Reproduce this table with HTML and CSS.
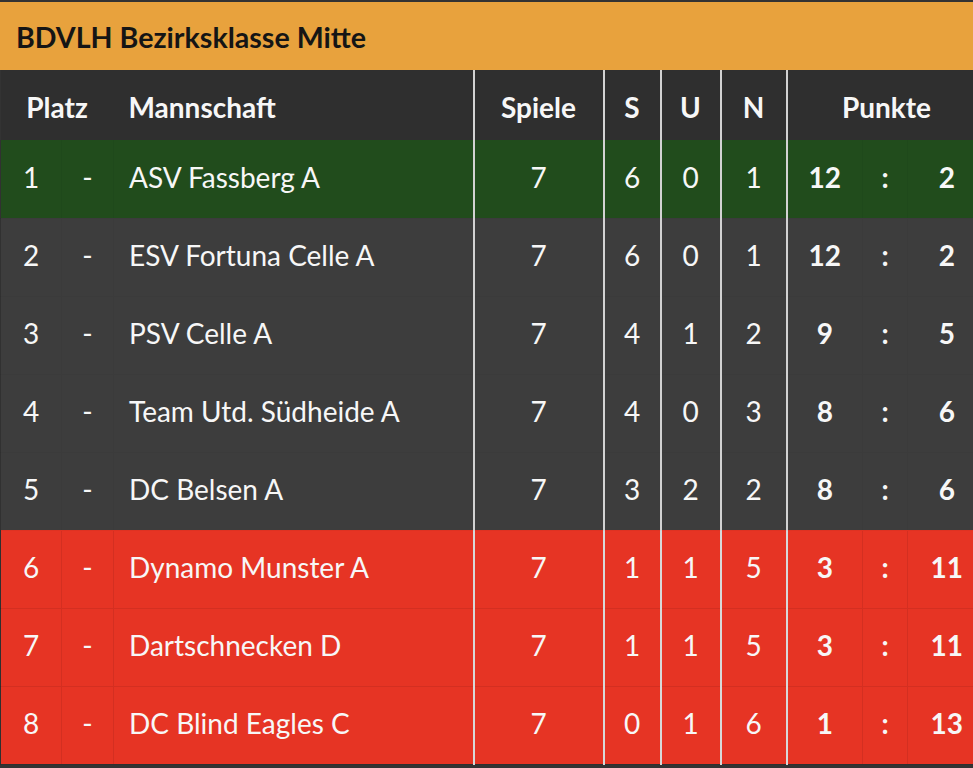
FILE: index.html
```html
<!DOCTYPE html>
<html lang="de">
<head>
<meta charset="utf-8">
<title>BDVLH Bezirksklasse Mitte</title>
<link rel="stylesheet" href="styles.css">
</head>
<body>
<div class="page">
<div class="title">BDVLH Bezirksklasse Mitte</div>
<table class="standings">
  <colgroup>
    <col class="c-platz"><col class="c-dash"><col class="c-team"><col class="c-spiele">
    <col class="c-s"><col class="c-u"><col class="c-n"><col class="c-p1"><col class="c-p2"><col class="c-p3">
  </colgroup>
  <thead>
    <tr>
      <th colspan="2" class="center">Platz</th>
      <th class="team">Mannschaft</th>
      <th class="sep">Spiele</th>
      <th class="sep">S</th>
      <th class="sep">U</th>
      <th class="sep">N</th>
      <th colspan="3" class="sep">Punkte</th>
    </tr>
  </thead>
  <tbody>
    <tr class="up"><td>1</td><td>-</td><td class="team">ASV Fassberg A</td><td class="sep">7</td><td class="sep">6</td><td class="sep">0</td><td class="sep">1</td><td class="sep b">12</td><td class="b">:</td><td class="b">2</td></tr>
    <tr><td>2</td><td>-</td><td class="team">ESV Fortuna Celle A</td><td class="sep">7</td><td class="sep">6</td><td class="sep">0</td><td class="sep">1</td><td class="sep b">12</td><td class="b">:</td><td class="b">2</td></tr>
    <tr><td>3</td><td>-</td><td class="team">PSV Celle A</td><td class="sep">7</td><td class="sep">4</td><td class="sep">1</td><td class="sep">2</td><td class="sep b">9</td><td class="b">:</td><td class="b">5</td></tr>
    <tr><td>4</td><td>-</td><td class="team">Team Utd. Südheide A</td><td class="sep">7</td><td class="sep">4</td><td class="sep">0</td><td class="sep">3</td><td class="sep b">8</td><td class="b">:</td><td class="b">6</td></tr>
    <tr><td>5</td><td>-</td><td class="team">DC Belsen A</td><td class="sep">7</td><td class="sep">3</td><td class="sep">2</td><td class="sep">2</td><td class="sep b">8</td><td class="b">:</td><td class="b">6</td></tr>
    <tr class="down"><td>6</td><td>-</td><td class="team">Dynamo Munster A</td><td class="sep">7</td><td class="sep">1</td><td class="sep">1</td><td class="sep">5</td><td class="sep b">3</td><td class="b">:</td><td class="b">11</td></tr>
    <tr class="down"><td>7</td><td>-</td><td class="team">Dartschnecken D</td><td class="sep">7</td><td class="sep">1</td><td class="sep">1</td><td class="sep">5</td><td class="sep b">3</td><td class="b">:</td><td class="b">11</td></tr>
    <tr class="down"><td>8</td><td>-</td><td class="team">DC Blind Eagles C</td><td class="sep">7</td><td class="sep">0</td><td class="sep">1</td><td class="sep">6</td><td class="sep b">1</td><td class="b">:</td><td class="b">13</td></tr>
  </tbody>
</table>
</div>
</body>
</html>
```

FILE: styles.css
```css
html, body {
  margin: 0;
  padding: 0;
  background: #333333;
}
body {
  font-family: Lato, "Open Sans", sans-serif;
  overflow: hidden;
}
.page {
  width: 973px;
  overflow: hidden;
  padding-top: 2px;
}
.title {
  background: #e8a23d;
  color: #151515;
  font-weight: 700;
  font-size: 28.6px;
  height: 68px;
  line-height: 70px;
  padding-left: 16px;
  box-sizing: border-box;
}
.standings {
  border-collapse: collapse;
  table-layout: fixed;
  width: 985px;
  color: #f7f7f7;
  font-size: 28px;
}
.c-platz { width: 61px; }
.c-dash { width: 52px; }
.c-team { width: 360px; }
.c-spiele { width: 130px; }
.c-s { width: 57px; }
.c-u { width: 60px; }
.c-n { width: 66px; }
.c-p1 { width: 76px; }
.c-p2 { width: 45px; }
.c-p3 { width: 78px; }
th, td {
  padding: 0;
  text-align: center;
  white-space: nowrap;
}
thead tr {
  background: #2f2f2f;
  height: 70px;
}
th {
  font-weight: 700;
  padding-top: 4px;
}
tbody tr {
  height: 78px;
  background: #3d3d3d;
}
tbody td {
  padding-bottom: 4px;
  border-left: 1px solid rgba(0, 0, 0, 0.03);
  border-bottom: 1px solid rgba(0, 0, 0, 0.03);
}
tbody tr.up { background: #214c1c; }
tbody tr.down { background: #e63424; }
tbody tr.down td {
  border-left-color: rgba(0, 0, 0, 0.08);
  border-bottom-color: rgba(0, 0, 0, 0.08);
}
.team {
  text-align: left;
  padding-left: 15px;
}
th.sep, td.sep {
  border-left: 2px solid #d2d2d2;
}
tbody tr.down td.sep { border-left-color: #d8d8d8; }
.b { font-weight: 700; }
```
